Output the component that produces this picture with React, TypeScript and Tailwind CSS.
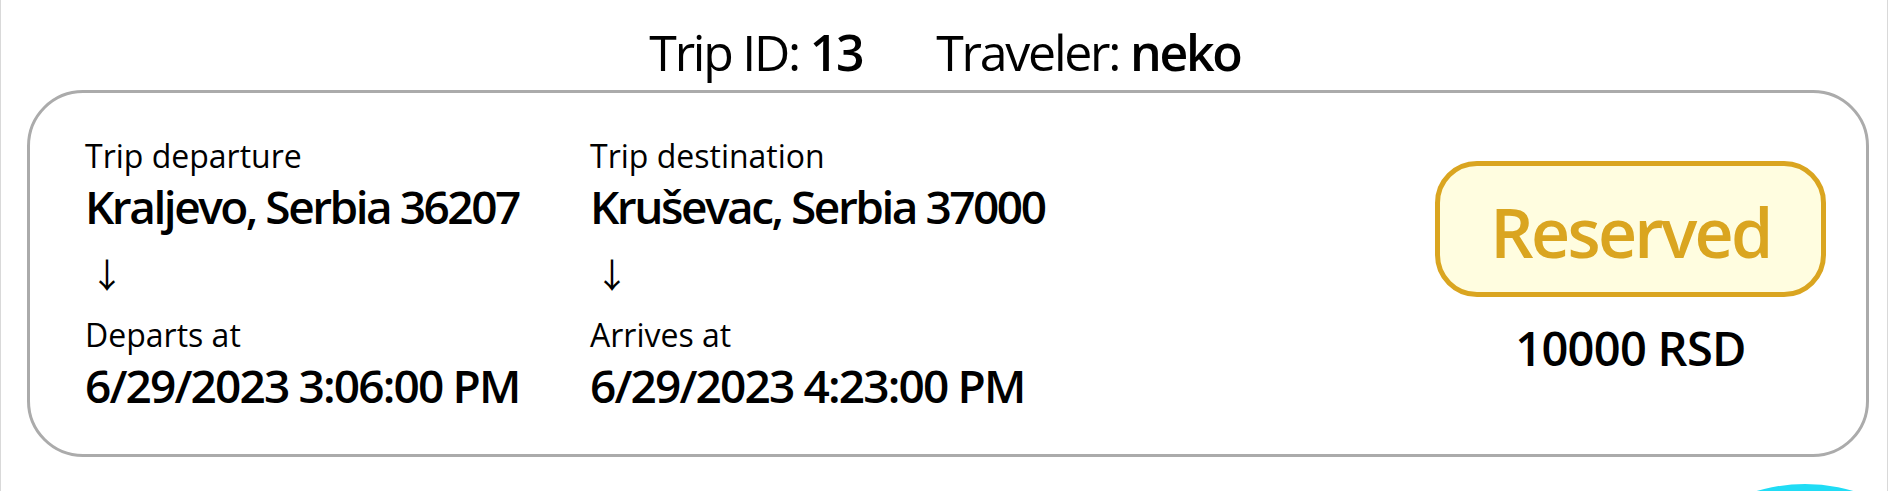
import React from "react";

const font = { fontFamily: '"Open Sans", "Noto Sans", sans-serif' };

function Field({ label, value, vc }: { label: string; value: string; vc: string }) {
  return (
    <div>
      <div className="text-[32px] leading-[40px] text-black">{label}</div>
      <div className={"whitespace-nowrap text-[46px] leading-[60px] font-semibold text-black " + vc}>{value}</div>
    </div>
  );
}

function Column({ l1, v1, l2, v2, w }: { l1: string; v1: string; l2: string; v2: string; w: string }) {
  return (
    <div className={w}>
      <Field label={l1} value={v1} vc="tracking-[-0.054em]" />
      <div className="h-[79px] pt-[21px] pl-[5px] text-[34px] leading-[34px] text-black [font-family:'Noto_Sans_CJK_JP',sans-serif]">↓</div>
      <Field label={l2} value={v2} vc="tracking-[-0.04em]" />
    </div>
  );
}

export default function App() {
  return (
    <div className="relative h-[491px] w-full overflow-hidden bg-white" style={font}>
      <div className="h-full w-[1888px] border-x border-[#d9d9d9]">
        <div className="flex justify-center gap-[74px] pl-[2px] pt-[17px] text-[50px] leading-[70px] tracking-[-0.045em] text-black">
          <span>
            Trip ID: <span className="font-semibold">13</span>
          </span>
          <span>
            Traveler: <span className="font-semibold">neko</span>
          </span>
        </div>
        <div className="ml-[26px] mt-[3px] flex w-[1842px] items-start rounded-[56px] border-[3px] border-[#ababab] pb-[39px] pl-[55px] pr-[40px] pt-[43px]">
          <div className="flex flex-1">
            <Column
              w="w-[505px]"
              l1="Trip departure"
              v1="Kraljevo, Serbia 36207"
              l2="Departs at"
              v2="6/29/2023 3:06:00 PM"
            />
            <Column
              w="flex-1"
              l1="Trip destination"
              v1="Kruševac, Serbia 37000"
              l2="Arrives at"
              v2="6/29/2023 4:23:00 PM"
            />
          </div>
          <div className="mt-[25px] flex w-[391px] flex-col items-center">
            <div className="flex h-[136px] w-[391px] items-center justify-center rounded-[42px] border-[5px] border-[#daa520] bg-[#fffde0] pt-[6px] text-[68px] font-semibold tracking-[-0.04em] text-[#daa520]">
              Reserved
            </div>
            <div className="mt-[21px] text-[47px] leading-[60px] font-semibold tracking-[-0.015em] text-black">10000 RSD</div>
          </div>
        </div>
      </div>
      <div className="absolute left-[1635px] top-[484px] h-[340px] w-[340px] rounded-full bg-[#20dcf5]" />
    </div>
  );
}
